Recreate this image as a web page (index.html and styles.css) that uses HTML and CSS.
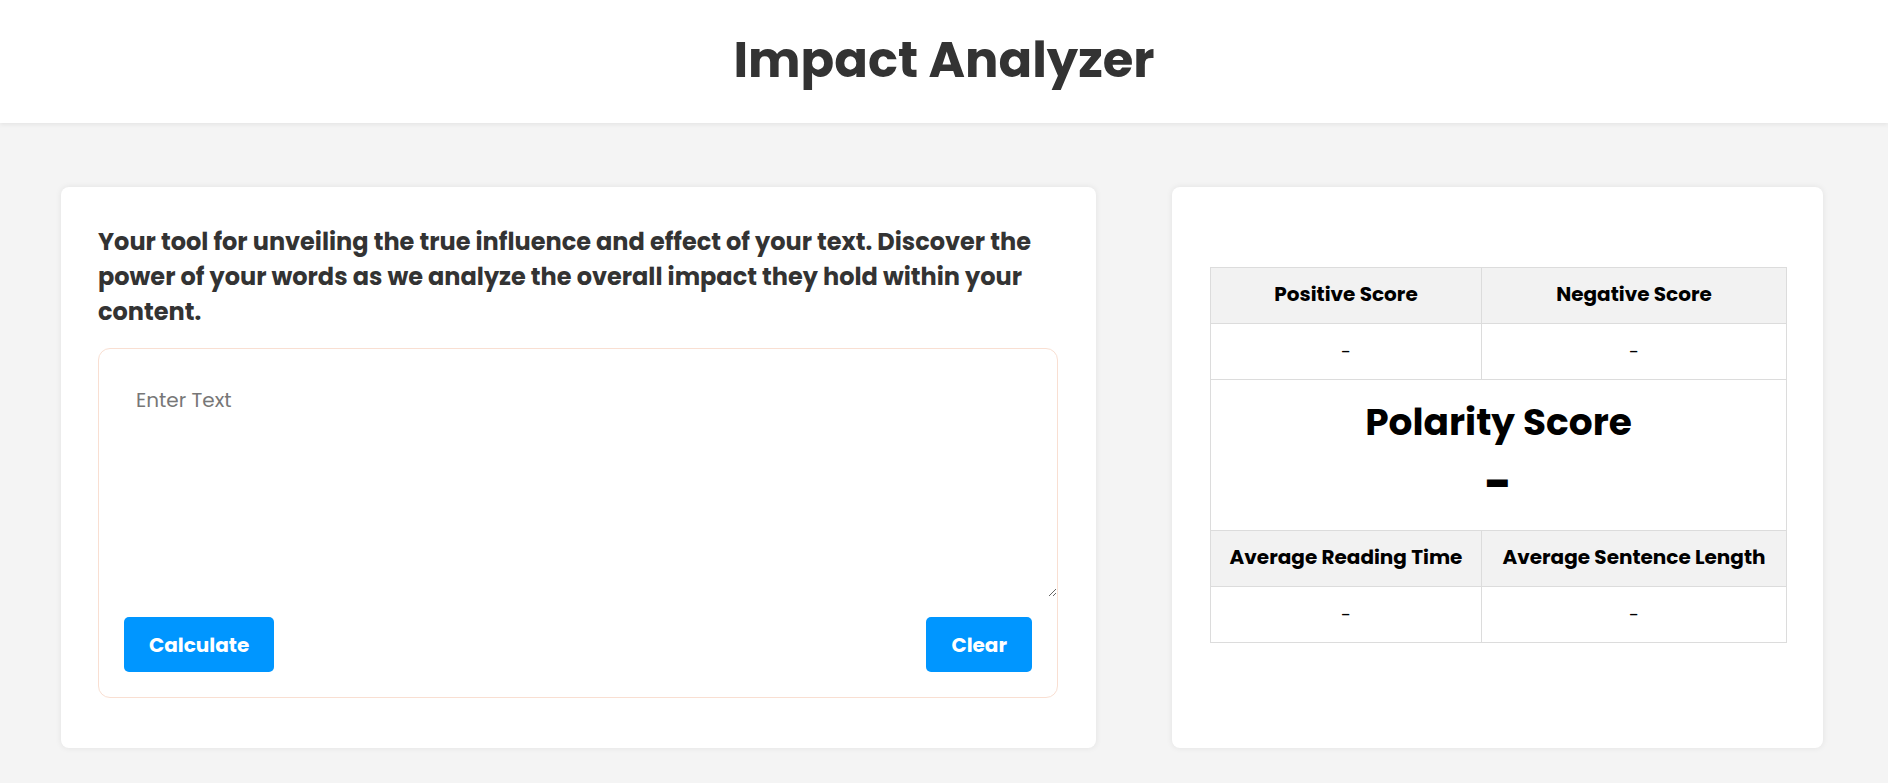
FILE: index.html
```html
<!DOCTYPE html>
<html lang="en">
<head>
<meta charset="utf-8">
<title>Impact Analyzer</title>
<link rel="stylesheet" href="styles.css">
</head>
<body>
<header class="site-header">
  <h1 class="site-title">Impact Analyzer</h1>
</header>
<main class="layout">
  <section class="card card-input">
    <p class="intro">Your tool for unveiling the true influence and effect of your text. Discover the power of your words as we analyze the overall impact they hold within your content.</p>
    <div class="input-box">
      <textarea class="text-input" placeholder="Enter Text"></textarea>
      <div class="actions">
        <button class="btn" type="button">Calculate</button>
        <button class="btn" type="button">Clear</button>
      </div>
    </div>
  </section>
  <section class="card card-result">
    <table class="results">
      <colgroup>
        <col class="col-a">
        <col class="col-b">
      </colgroup>
      <tr class="row-head">
        <th>Positive Score</th>
        <th>Negative Score</th>
      </tr>
      <tr class="row-value">
        <td>-</td>
        <td>-</td>
      </tr>
      <tr>
        <td class="polarity" colspan="2">
          <div class="polarity-title">Polarity Score</div>
          <div class="polarity-value">-</div>
        </td>
      </tr>
      <tr class="row-head">
        <th>Average Reading Time</th>
        <th>Average Sentence Length</th>
      </tr>
      <tr class="row-value">
        <td>-</td>
        <td>-</td>
      </tr>
    </table>
  </section>
</main>
</body>
</html>
```
FILE: styles.css
```css
* {
  box-sizing: border-box;
}

html, body {
  margin: 0;
  padding: 0;
}

body {
  background: #f4f4f4;
  font-family: "Poppins", "Inter", "Noto Sans", sans-serif;
  color: #333;
  min-height: 783px;
}

.site-header {
  background: #fff;
  height: 123px;
  padding-bottom: 4px;
  display: flex;
  align-items: center;
  justify-content: center;
  box-shadow: 0 2px 4px rgba(0, 0, 0, 0.06);
}

.site-title {
  margin: 0;
  font-size: 49.6px;
  font-weight: 700;
  color: #333;
}

.layout {
  display: grid;
  grid-template-columns: 1035px 651px;
  column-gap: 76px;
  padding: 64px 0 0 61px;
}

.card {
  background: #fff;
  border-radius: 8px;
  box-shadow: 0 0 6px rgba(0, 0, 0, 0.08);
  height: 561px;
}

.card-input {
  padding: 37px 38px 50px 37px;
  display: flex;
  flex-direction: column;
}

.intro {
  margin: 0 0 19px;
  font-size: 24px;
  line-height: 35px;
  font-weight: 700;
  color: #333;
}

.input-box {
  flex: 1;
  border: 1px solid #f9dfd2;
  border-radius: 12px;
  display: flex;
  flex-direction: column;
}

.text-input {
  flex: 1;
  width: 100%;
  border: none;
  outline: none;
  background: transparent;
  padding: 36px 37px;
  font-family: inherit;
  font-size: 20px;
  color: #333;
  resize: vertical;
  border-radius: 12px 12px 0 0;
}

.text-input::placeholder {
  color: #777;
}

.actions {
  display: flex;
  justify-content: space-between;
  padding: 20px 25px 25px;
}

.btn {
  height: 55px;
  padding: 0 25px;
  border: none;
  border-radius: 5px;
  background: #0096ff;
  color: #fff;
  font-family: inherit;
  font-size: 20px;
  font-weight: 700;
  cursor: pointer;
}

.card-result {
  padding: 80px 37px 37px 38px;
}

.results {
  width: 576px;
  border-collapse: collapse;
  table-layout: fixed;
  color: #000;
}

.col-a {
  width: 271px;
}

.col-b {
  width: 305px;
}

.results th,
.results td {
  border: 1px solid #dcdcdc;
  text-align: center;
  vertical-align: middle;
  padding: 0;
}

.row-head th {
  background: #f2f2f2;
  height: 56px;
  padding-bottom: 3px;
  font-size: 20px;
  font-weight: 700;
}

.row-value td {
  height: 56px;
  font-size: 18px;
}

.results .polarity {
  height: 151px;
  vertical-align: top;
  padding-top: 20px;
}

.polarity-title {
  font-size: 37.5px;
  font-weight: 700;
  line-height: 44px;
}

.polarity-value {
  margin-top: 9px;
  font-size: 46px;
  font-weight: 800;
  line-height: 60px;
}
```
